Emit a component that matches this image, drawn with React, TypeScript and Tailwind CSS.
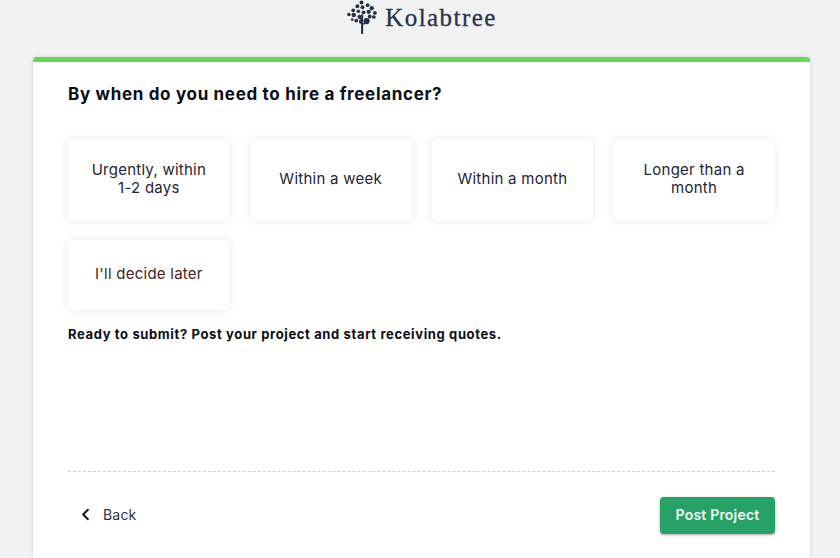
import { ChevronLeft } from "lucide-react";

const options = [
  { label: "Urgently, within 1-2 days", className: "px-5" },
  { label: "Within a week" },
  { label: "Within a month" },
  { label: "Longer than a month", className: "px-6" },
];

const dots: [number, number, number][] = [
  [14, 2.5, 1.9], [10, 6, 1.9], [15, 7, 1.9], [20, 5, 1.8], [24, 8, 2.1], [27, 12.5, 1.9],
  [6, 10, 1.8], [1.8, 14, 1.7], [6.5, 14.5, 2.2], [11, 11, 1.7], [16, 12, 1.8], [21, 11.5, 2.1],
  [26, 16.5, 1.8], [12, 16, 1.8], [22, 16, 1.9], [9, 20, 1.9], [13.5, 21, 2], [19, 20.5, 3],
  [5, 19, 1.3],
];

function Logo() {
  return (
    <div className="flex h-[57px] items-start justify-center pl-[4px]">
      <svg width="31" height="34" viewBox="0 0 30 33" className="mr-[7px] text-[#27304a]" fill="currentColor">
        {dots.map(([cx, cy, r]) => (
          <circle key={`${cx}-${cy}`} cx={cx} cy={cy} r={r} />
        ))}
        <path d="M13.6 14h2v19h-2z" />
        <path d="M14.5 23l5-2v1.6l-5 2z" />
        <path d="M14.5 18l-4-2v1.6l4 2z" />
      </svg>
      <span className="mt-[2px] font-['Liberation_Serif',serif] text-[25px] leading-[32px] tracking-[1.45px] text-[#2a3249] [-webkit-text-stroke:0.3px_#2a3249]">
        Kolabtree
      </span>
    </div>
  );
}

function OptionCard({ label, className = "" }: { label: string; className?: string }) {
  return (
    <button
      className={`flex h-[82px] items-center justify-center rounded-[5px] bg-white pb-[2px] text-center text-[15px] leading-[18px] tracking-[0.25px] text-[#1f2433] shadow-[0_0_8px_rgba(0,0,0,0.09)] ${className}`}
    >
      {label}
    </button>
  );
}

export default function App() {
  return (
    <div className="flex h-[558px] w-[840px] flex-col overflow-hidden bg-[#f2f2f2] font-['Inter',sans-serif]">
      <Logo />

      <div className="ml-[33px] mr-[30px] flex flex-1 flex-col rounded-t-[4px] border-t-[5px] border-[#66d957] bg-white px-[35px] shadow-[0_0_5px_rgba(0,0,0,0.12)]">
        <h1 className="mt-[20px] text-[17px] font-bold leading-[24px] tracking-[0.68px] text-[#0b0d14]">
          By when do you need to hire a freelancer?
        </h1>

        {/* Answer options */}
        <div className="mt-[33px] grid grid-cols-4 gap-x-[20px] gap-y-[19px]">
          {options.map((o) => (
            <OptionCard key={o.label} label={o.label} className={o.className} />
          ))}
          <button className="flex h-[70px] items-center justify-center rounded-[5px] bg-white pb-[2px] text-[15px] tracking-[0.25px] text-[#4a1a1f] shadow-[0_0_8px_rgba(0,0,0,0.09)]">
            I'll decide later
          </button>
        </div>

        <p className="mt-[15px] text-[13px] font-bold leading-[18px] tracking-[0.63px] text-[#0b0d14]">
          Ready to submit? Post your project and start receiving quotes.
        </p>

        {/* Footer */}
        <div className="mt-auto border-t border-dashed border-[#cfcfcf] pt-[25px] pb-[24px]">
          <div className="flex items-center justify-between">
            <button className="flex items-center pb-[2px] pl-[8px] text-[14px] tracking-[0.2px] text-[#2d3342]">
              <ChevronLeft size={19} strokeWidth={2.5} className="mr-[8px] text-[#10131c]" />
              Back
            </button>
            <button className="h-[37px] w-[115px] rounded-[4px] bg-[#27a267] pb-[2px] text-[14px] font-semibold tracking-[0.2px] text-[#f3faf6] shadow-[0_1px_3px_rgba(0,0,0,0.35)]">
              Post Project
            </button>
          </div>
        </div>
      </div>
    </div>
  );
}
